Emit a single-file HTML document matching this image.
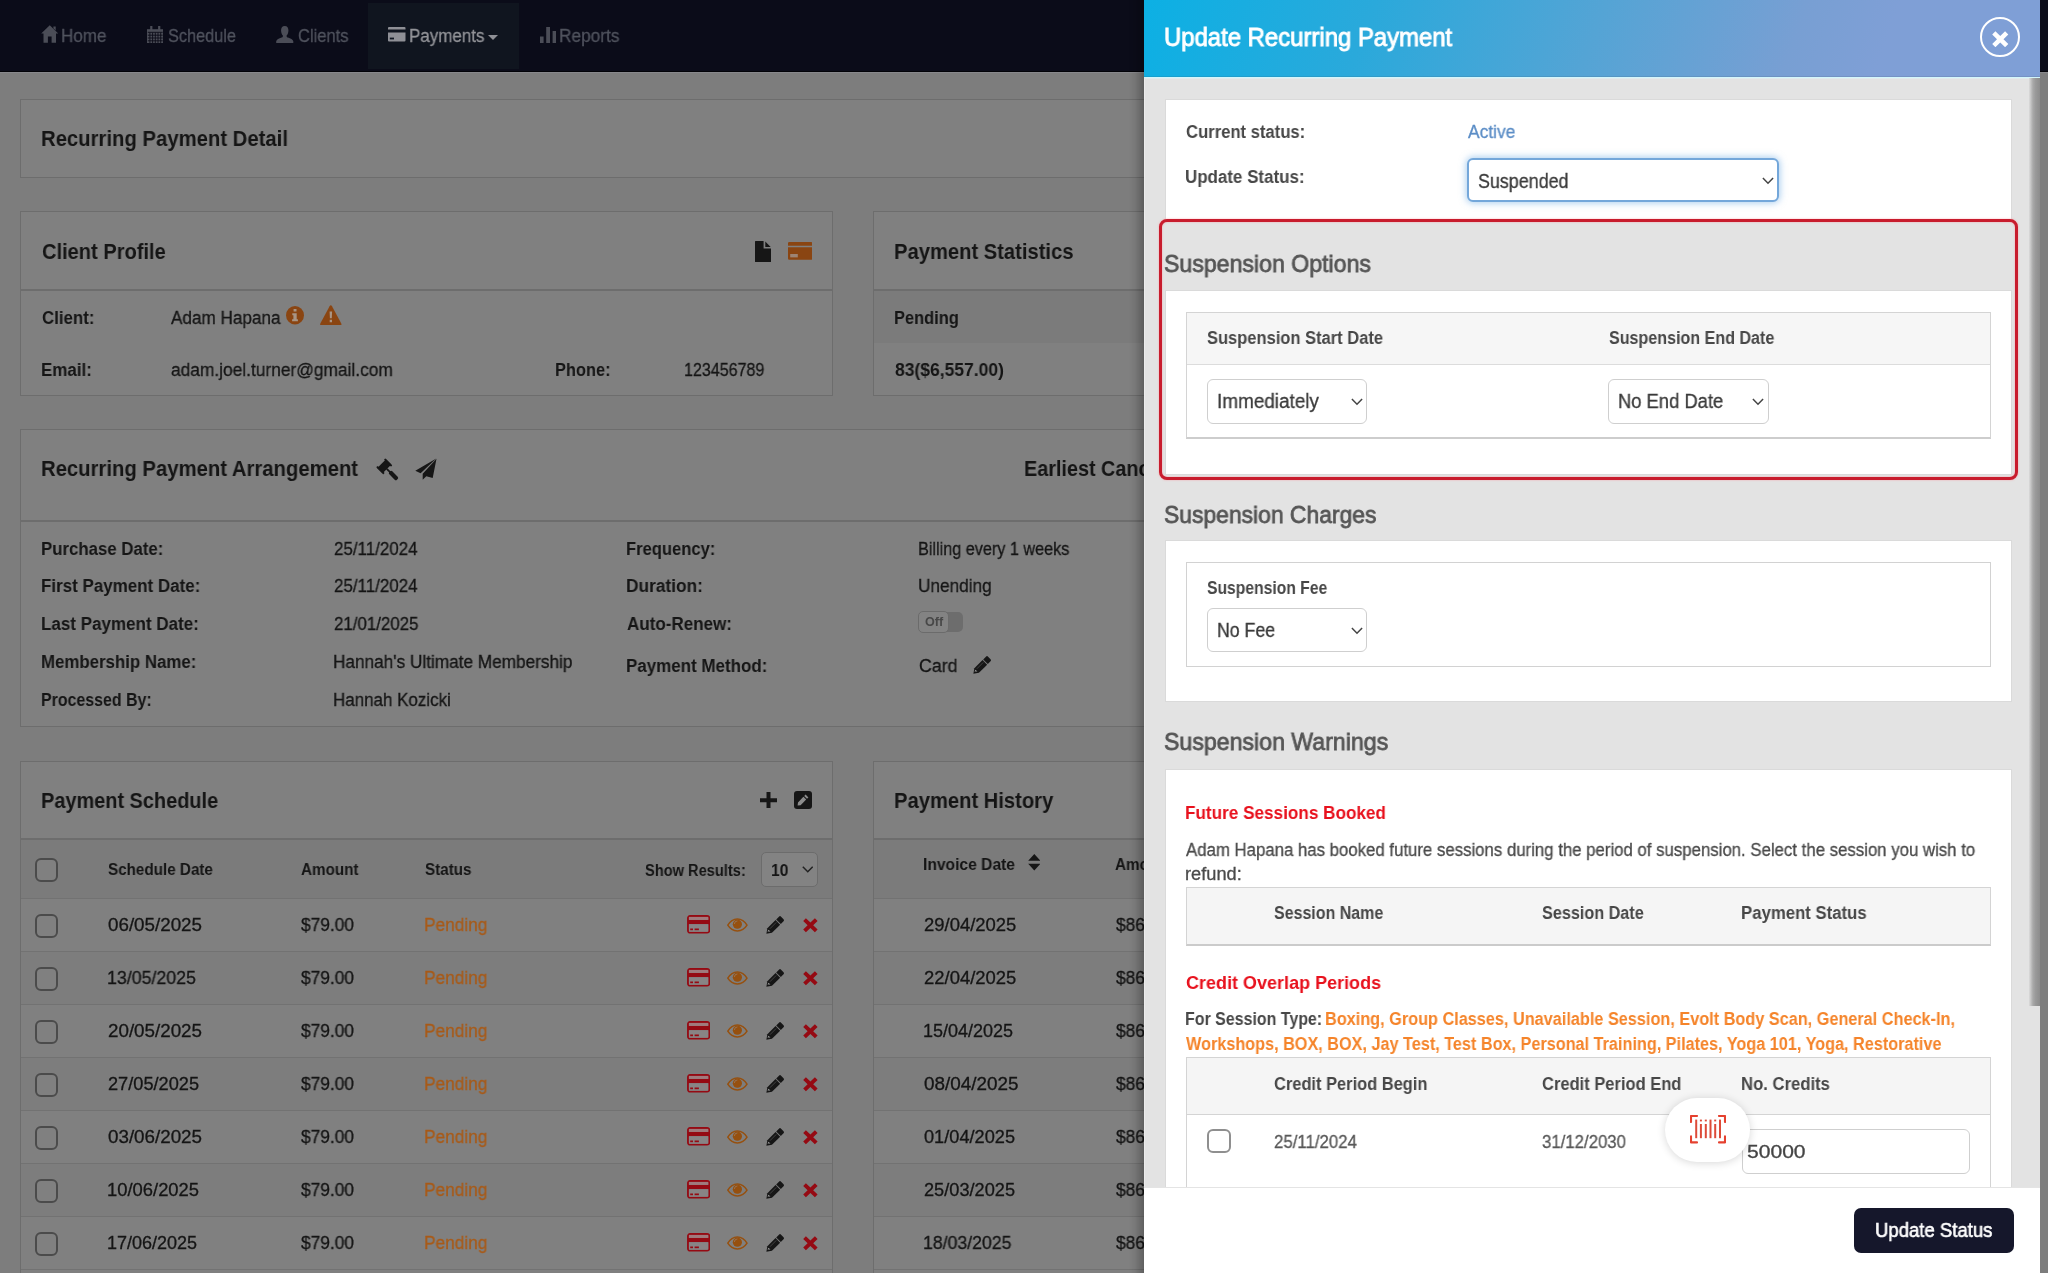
<!DOCTYPE html>
<html lang="en">
<head>
<meta charset="utf-8">
<title>Recurring Payment Detail</title>
<style>
html,body{margin:0;padding:0}
body{width:2048px;height:1273px;overflow:hidden;position:relative;background:#7d7d7d;font-family:"Liberation Sans",sans-serif}
div,span,svg{position:absolute;box-sizing:border-box}
.t{white-space:pre;line-height:1;transform-origin:0 0;letter-spacing:0;will-change:transform}
#page{left:0;top:0;width:2048px;height:1273px;overflow:hidden;background:#7d7d7d}
.card{background:#808080;border:1px solid #6d6d6d}
.hl{background:#6d6d6d;height:2px}
.rl{background:#727272;height:1px}
.cb{width:23.8px;height:23.8px;border:2.2px solid #4b4b4b;border-radius:6px;background:#808080}
#panel{left:1144px;top:0;width:896px;height:1273px;background:#e3e3e3;overflow:hidden}
.wc{background:#fff;border:1px solid #dadada}
.sel{background:#fff;border:1px solid #cfcfcf;border-radius:6px}
</style>
</head>
<body>
<div id="page">
  <!-- navbar -->
  <div style="left:0;top:0;width:2048px;height:72px;background:#0b0c19"></div>
  <div style="left:368px;top:2.5px;width:150.8px;height:66.3px;background:#10151f"></div>
  <div style="left:0;top:71px;width:2048px;height:1px;background:#020207"></div>
  <div style="left:0;top:72px;width:2048px;height:1px;background:#88888c"></div>

  <!-- cards -->
  <div class="card" style="left:20px;top:99px;width:2008px;height:79px"></div>

  <div class="card" style="left:20px;top:211px;width:813px;height:185px"></div>
  <div class="hl" style="left:20px;top:289px;width:813px"></div>

  <div class="card" style="left:873px;top:211px;width:1155px;height:185px"></div>
  <div style="left:874px;top:291px;width:1153px;height:52px;background:#7b7b7b"></div>
  <div class="hl" style="left:873px;top:289px;width:1155px"></div>

  <div class="card" style="left:20px;top:429px;width:2008px;height:298px"></div>
  <div class="hl" style="left:20px;top:520px;width:2008px"></div>

  <div class="card" style="left:20px;top:761px;width:813px;height:530px"></div>
  <div class="hl" style="left:20px;top:838px;width:813px"></div>
  <div class="card" style="left:873px;top:761px;width:1155px;height:530px"></div>
  <div style="left:874px;top:840px;width:1153px;height:58px;background:#7b7b7b"></div>
  <div class="hl" style="left:873px;top:838px;width:1155px"></div>
  <div style="left:21px;top:840px;width:811px;height:58px;background:#7b7b7b"></div>
<div style="left:21px;top:952px;width:811px;height:53px;background:#7d7d7d"></div>
<div style="left:874px;top:952px;width:1153px;height:53px;background:#7d7d7d"></div>
<div style="left:21px;top:1058px;width:811px;height:53px;background:#7d7d7d"></div>
<div style="left:874px;top:1058px;width:1153px;height:53px;background:#7d7d7d"></div>
<div style="left:21px;top:1164px;width:811px;height:53px;background:#7d7d7d"></div>
<div style="left:874px;top:1164px;width:1153px;height:53px;background:#7d7d7d"></div>
<div class="rl" style="left:21px;top:898px;width:811px"></div>
<div class="rl" style="left:874px;top:898px;width:1153px"></div>
<div class="rl" style="left:21px;top:951px;width:811px"></div>
<div class="rl" style="left:874px;top:951px;width:1153px"></div>
<div class="rl" style="left:21px;top:1004px;width:811px"></div>
<div class="rl" style="left:874px;top:1004px;width:1153px"></div>
<div class="rl" style="left:21px;top:1057px;width:811px"></div>
<div class="rl" style="left:874px;top:1057px;width:1153px"></div>
<div class="rl" style="left:21px;top:1110px;width:811px"></div>
<div class="rl" style="left:874px;top:1110px;width:1153px"></div>
<div class="rl" style="left:21px;top:1163px;width:811px"></div>
<div class="rl" style="left:874px;top:1163px;width:1153px"></div>
<div class="rl" style="left:21px;top:1216px;width:811px"></div>
<div class="rl" style="left:874px;top:1216px;width:1153px"></div>
<div class="rl" style="left:21px;top:1269px;width:811px"></div>
<div class="rl" style="left:874px;top:1269px;width:1153px"></div>
<div class="cb" style="left:34.7px;top:858.3px"></div>
<div class="cb" style="left:34.7px;top:913.8px"></div>
<div class="cb" style="left:34.7px;top:966.8px"></div>
<div class="cb" style="left:34.7px;top:1019.8px"></div>
<div class="cb" style="left:34.7px;top:1072.8px"></div>
<div class="cb" style="left:34.7px;top:1125.8px"></div>
<div class="cb" style="left:34.7px;top:1178.8px"></div>
<div class="cb" style="left:34.7px;top:1231.8px"></div>
<div style="left:761px;top:852px;width:57px;height:35px;border:1px solid #6c6c6c;border-radius:5px;background:#838383"></div>
<div style="left:940px;top:612px;width:23px;height:20px;border-radius:0 5px 5px 0;background:#6d6d6d"></div>
<div style="left:918px;top:610.5px;width:31px;height:22.5px;border-radius:5px;background:#838383;border:1.5px solid #6b6b6b"></div>

  <span class="t" style="left:60.55px;top:27.00px;font-size:18px;color:#50535e;transform:scaleX(0.9467);-webkit-text-stroke:0.3px #50535e">Home</span>
<span class="t" style="left:168.00px;top:27.00px;font-size:18px;color:#50535e;transform:scaleX(0.9061);-webkit-text-stroke:0.3px #50535e">Schedule</span>
<span class="t" style="left:297.50px;top:27.00px;font-size:18px;color:#50535e;transform:scaleX(0.9179);-webkit-text-stroke:0.3px #50535e">Clients</span>
<span class="t" style="left:409.06px;top:27.00px;font-size:18px;color:#939499;transform:scaleX(0.9426);-webkit-text-stroke:0.3px #939499">Payments</span>
<span class="t" style="left:558.54px;top:27.00px;font-size:18px;color:#50535e;transform:scaleX(0.9593);-webkit-text-stroke:0.3px #50535e">Reports</span>
<span class="t" style="left:40.58px;top:128.00px;font-size:22px;color:#151515;transform:scaleX(0.9223);font-weight:700">Recurring Payment Detail</span>
<span class="t" style="left:41.50px;top:241.00px;font-size:22px;color:#151515;transform:scaleX(0.9118);font-weight:700">Client Profile</span>
<span class="t" style="left:894.08px;top:241.00px;font-size:22px;color:#151515;transform:scaleX(0.9172);font-weight:700">Payment Statistics</span>
<span class="t" style="left:40.58px;top:458.00px;font-size:22px;color:#151515;transform:scaleX(0.9218);font-weight:700">Recurring Payment Arrangement</span>
<span class="t" style="left:1023.50px;top:458.00px;font-size:22px;color:#151515;transform:scaleX(0.9000);font-weight:700">Earliest Cancellation Date:</span>
<span class="t" style="left:40.59px;top:790.00px;font-size:22px;color:#151515;transform:scaleX(0.9054);font-weight:700">Payment Schedule</span>
<span class="t" style="left:894.08px;top:790.00px;font-size:22px;color:#151515;transform:scaleX(0.9171);font-weight:700">Payment History</span>
<span class="t" style="left:41.50px;top:309.00px;font-size:18px;color:#151515;transform:scaleX(0.9363);font-weight:700">Client:</span>
<span class="t" style="left:170.50px;top:309.00px;font-size:18px;color:#151515;transform:scaleX(0.9521);-webkit-text-stroke:0.3px #151515">Adam Hapana</span>
<span class="t" style="left:40.56px;top:361.00px;font-size:18px;color:#151515;transform:scaleX(0.9419);font-weight:700">Email:</span>
<span class="t" style="left:170.50px;top:361.00px;font-size:18px;color:#151515;transform:scaleX(0.9635);-webkit-text-stroke:0.3px #151515">adam.joel.turner@gmail.com</span>
<span class="t" style="left:554.84px;top:361.00px;font-size:18px;color:#151515;transform:scaleX(0.9110);font-weight:700">Phone:</span>
<span class="t" style="left:683.61px;top:361.00px;font-size:18px;color:#151515;transform:scaleX(0.8924);-webkit-text-stroke:0.3px #151515">123456789</span>
<span class="t" style="left:894.09px;top:309.00px;font-size:18px;color:#151515;transform:scaleX(0.9130);font-weight:700">Pending</span>
<span class="t" style="left:895.00px;top:361.00px;font-size:18px;color:#151515;transform:scaleX(0.9724);font-weight:700">83($6,557.00)</span>
<span class="t" style="left:40.57px;top:540.00px;font-size:18px;color:#151515;transform:scaleX(0.9337);font-weight:700">Purchase Date:</span>
<span class="t" style="left:334.00px;top:540.00px;font-size:18px;color:#151515;transform:scaleX(0.9409);-webkit-text-stroke:0.3px #151515">25/11/2024</span>
<span class="t" style="left:40.56px;top:577.00px;font-size:18px;color:#151515;transform:scaleX(0.9428);font-weight:700">First Payment Date:</span>
<span class="t" style="left:334.00px;top:577.00px;font-size:18px;color:#151515;transform:scaleX(0.9409);-webkit-text-stroke:0.3px #151515">25/11/2024</span>
<span class="t" style="left:40.55px;top:615.00px;font-size:18px;color:#151515;transform:scaleX(0.9451);font-weight:700">Last Payment Date:</span>
<span class="t" style="left:334.00px;top:615.00px;font-size:18px;color:#151515;transform:scaleX(0.9381);-webkit-text-stroke:0.3px #151515">21/01/2025</span>
<span class="t" style="left:40.56px;top:653.00px;font-size:18px;color:#151515;transform:scaleX(0.9357);font-weight:700">Membership Name:</span>
<span class="t" style="left:333.04px;top:653.00px;font-size:18px;color:#151515;transform:scaleX(0.9558);-webkit-text-stroke:0.3px #151515">Hannah&#x27;s Ultimate Membership</span>
<span class="t" style="left:40.61px;top:691.00px;font-size:18px;color:#151515;transform:scaleX(0.8857);font-weight:700">Processed By:</span>
<span class="t" style="left:333.06px;top:691.00px;font-size:18px;color:#151515;transform:scaleX(0.9426);-webkit-text-stroke:0.3px #151515">Hannah Kozicki</span>
<span class="t" style="left:625.58px;top:540.00px;font-size:18px;color:#151515;transform:scaleX(0.9208);font-weight:700">Frequency:</span>
<span class="t" style="left:918.30px;top:540.00px;font-size:18px;color:#151515;transform:scaleX(0.9008);-webkit-text-stroke:0.3px #151515">Billing every 1 weeks</span>
<span class="t" style="left:625.54px;top:577.00px;font-size:18px;color:#151515;transform:scaleX(0.9616);font-weight:700">Duration:</span>
<span class="t" style="left:918.24px;top:577.00px;font-size:18px;color:#151515;transform:scaleX(0.9567);-webkit-text-stroke:0.3px #151515">Unending</span>
<span class="t" style="left:626.50px;top:615.00px;font-size:18px;color:#151515;transform:scaleX(0.9455);font-weight:700">Auto-Renew:</span>
<span class="t" style="left:924.50px;top:616.00px;font-size:12.5px;color:#484848;transform:scaleX(1.0061);font-weight:700">Off</span>
<span class="t" style="left:625.56px;top:657.00px;font-size:18px;color:#151515;transform:scaleX(0.9425);font-weight:700">Payment Method:</span>
<span class="t" style="left:919.00px;top:657.00px;font-size:18px;color:#151515;transform:scaleX(0.9867);-webkit-text-stroke:0.3px #151515">Card</span>
<span class="t" style="left:108.00px;top:862.00px;font-size:16px;color:#151515;transform:scaleX(0.9514);font-weight:700">Schedule Date</span>
<span class="t" style="left:300.75px;top:862.00px;font-size:16px;color:#151515;transform:scaleX(0.9533);font-weight:700">Amount</span>
<span class="t" style="left:424.50px;top:862.00px;font-size:16px;color:#151515;transform:scaleX(0.9490);font-weight:700">Status</span>
<span class="t" style="left:645.00px;top:863.00px;font-size:16px;color:#151515;transform:scaleX(0.9136);font-weight:700">Show Results:</span>
<span class="t" style="left:771.08px;top:862.00px;font-size:17px;color:#151515;transform:scaleX(0.9167);font-weight:700">10</span>
<span class="t" style="left:922.62px;top:857.00px;font-size:16px;color:#151515;transform:scaleX(0.9758);font-weight:700">Invoice Date</span>
<span class="t" style="left:1115.20px;top:857.00px;font-size:16px;color:#151515;transform:scaleX(0.9533);font-weight:700">Amount</span>
<span class="t" style="left:108.00px;top:916.00px;font-size:18px;color:#151515;transform:scaleX(1.0435);-webkit-text-stroke:0.3px #151515">06/05/2025</span>
<span class="t" style="left:300.75px;top:916.00px;font-size:18px;color:#151515;transform:scaleX(0.9629);-webkit-text-stroke:0.3px #151515">$79.00</span>
<span class="t" style="left:423.54px;top:916.00px;font-size:18px;color:#a85a17;transform:scaleX(0.9602);-webkit-text-stroke:0.3px #a85a17">Pending</span>
<span class="t" style="left:923.75px;top:916.00px;font-size:18px;color:#151515;transform:scaleX(1.0241);-webkit-text-stroke:0.3px #151515">29/04/2025</span>
<span class="t" style="left:1115.75px;top:916.00px;font-size:18px;color:#151515;transform:scaleX(0.9629);-webkit-text-stroke:0.3px #151515">$86.00</span>
<span class="t" style="left:107.01px;top:969.00px;font-size:18px;color:#151515;transform:scaleX(0.9879);-webkit-text-stroke:0.3px #151515">13/05/2025</span>
<span class="t" style="left:300.75px;top:969.00px;font-size:18px;color:#151515;transform:scaleX(0.9629);-webkit-text-stroke:0.3px #151515">$79.00</span>
<span class="t" style="left:423.54px;top:969.00px;font-size:18px;color:#a85a17;transform:scaleX(0.9602);-webkit-text-stroke:0.3px #a85a17">Pending</span>
<span class="t" style="left:923.75px;top:969.00px;font-size:18px;color:#151515;transform:scaleX(1.0241);-webkit-text-stroke:0.3px #151515">22/04/2025</span>
<span class="t" style="left:1115.75px;top:969.00px;font-size:18px;color:#151515;transform:scaleX(0.9629);-webkit-text-stroke:0.3px #151515">$86.00</span>
<span class="t" style="left:108.00px;top:1022.00px;font-size:18px;color:#151515;transform:scaleX(1.0435);-webkit-text-stroke:0.3px #151515">20/05/2025</span>
<span class="t" style="left:300.75px;top:1022.00px;font-size:18px;color:#151515;transform:scaleX(0.9629);-webkit-text-stroke:0.3px #151515">$79.00</span>
<span class="t" style="left:423.54px;top:1022.00px;font-size:18px;color:#a85a17;transform:scaleX(0.9602);-webkit-text-stroke:0.3px #a85a17">Pending</span>
<span class="t" style="left:922.75px;top:1022.00px;font-size:18px;color:#151515;transform:scaleX(0.9991);-webkit-text-stroke:0.3px #151515">15/04/2025</span>
<span class="t" style="left:1115.75px;top:1022.00px;font-size:18px;color:#151515;transform:scaleX(0.9629);-webkit-text-stroke:0.3px #151515">$86.00</span>
<span class="t" style="left:108.00px;top:1075.00px;font-size:18px;color:#151515;transform:scaleX(1.0102);-webkit-text-stroke:0.3px #151515">27/05/2025</span>
<span class="t" style="left:300.75px;top:1075.00px;font-size:18px;color:#151515;transform:scaleX(0.9629);-webkit-text-stroke:0.3px #151515">$79.00</span>
<span class="t" style="left:423.54px;top:1075.00px;font-size:18px;color:#a85a17;transform:scaleX(0.9602);-webkit-text-stroke:0.3px #a85a17">Pending</span>
<span class="t" style="left:923.75px;top:1075.00px;font-size:18px;color:#151515;transform:scaleX(1.0491);-webkit-text-stroke:0.3px #151515">08/04/2025</span>
<span class="t" style="left:1115.75px;top:1075.00px;font-size:18px;color:#151515;transform:scaleX(0.9629);-webkit-text-stroke:0.3px #151515">$86.00</span>
<span class="t" style="left:108.00px;top:1128.00px;font-size:18px;color:#151515;transform:scaleX(1.0435);-webkit-text-stroke:0.3px #151515">03/06/2025</span>
<span class="t" style="left:300.75px;top:1128.00px;font-size:18px;color:#151515;transform:scaleX(0.9629);-webkit-text-stroke:0.3px #151515">$79.00</span>
<span class="t" style="left:423.54px;top:1128.00px;font-size:18px;color:#a85a17;transform:scaleX(0.9602);-webkit-text-stroke:0.3px #a85a17">Pending</span>
<span class="t" style="left:923.75px;top:1128.00px;font-size:18px;color:#151515;transform:scaleX(1.0102);-webkit-text-stroke:0.3px #151515">01/04/2025</span>
<span class="t" style="left:1115.75px;top:1128.00px;font-size:18px;color:#151515;transform:scaleX(0.9629);-webkit-text-stroke:0.3px #151515">$86.00</span>
<span class="t" style="left:106.98px;top:1181.00px;font-size:18px;color:#151515;transform:scaleX(1.0216);-webkit-text-stroke:0.3px #151515">10/06/2025</span>
<span class="t" style="left:300.75px;top:1181.00px;font-size:18px;color:#151515;transform:scaleX(0.9629);-webkit-text-stroke:0.3px #151515">$79.00</span>
<span class="t" style="left:423.54px;top:1181.00px;font-size:18px;color:#a85a17;transform:scaleX(0.9602);-webkit-text-stroke:0.3px #a85a17">Pending</span>
<span class="t" style="left:923.75px;top:1181.00px;font-size:18px;color:#151515;transform:scaleX(1.0102);-webkit-text-stroke:0.3px #151515">25/03/2025</span>
<span class="t" style="left:1115.75px;top:1181.00px;font-size:18px;color:#151515;transform:scaleX(0.9629);-webkit-text-stroke:0.3px #151515">$86.00</span>
<span class="t" style="left:107.00px;top:1234.00px;font-size:18px;color:#151515;transform:scaleX(0.9991);-webkit-text-stroke:0.3px #151515">17/06/2025</span>
<span class="t" style="left:300.75px;top:1234.00px;font-size:18px;color:#151515;transform:scaleX(0.9629);-webkit-text-stroke:0.3px #151515">$79.00</span>
<span class="t" style="left:423.54px;top:1234.00px;font-size:18px;color:#a85a17;transform:scaleX(0.9602);-webkit-text-stroke:0.3px #a85a17">Pending</span>
<span class="t" style="left:922.77px;top:1234.00px;font-size:18px;color:#151515;transform:scaleX(0.9823);-webkit-text-stroke:0.3px #151515">18/03/2025</span>
<span class="t" style="left:1115.75px;top:1234.00px;font-size:18px;color:#151515;transform:scaleX(0.9629);-webkit-text-stroke:0.3px #151515">$86.00</span>
  <svg style="left:40.5px;top:25px;width:17.5px;height:18px" viewBox="0 0 17.5 18" ><path fill="#4b4d57" d="M8.75 0.3 L17.3 8.6 H15 V17.7 H10.6 V11.6 H6.9 V17.7 H2.5 V8.6 H0.2 Z M12.4 1.6 h2.3 v3.9 l-2.3 -2.2z"/></svg>
<svg style="left:146.5px;top:25.5px;width:16.5px;height:17.5px" viewBox="0 0 16.5 17.5" ><path fill="#4b4d57" d="M0 3.2 H16.5 V17.5 H0 Z"/><rect x="3.2" y="0" width="2.2" height="4" fill="#4b4d57"/><rect x="11.1" y="0" width="2.2" height="4" fill="#4b4d57"/><g stroke="#0b0c19" stroke-width="0.9"><path d="M2.9 6.5 V17"/><path d="M5.6 6.5 V17"/><path d="M8.3 6.5 V17"/><path d="M11 6.5 V17"/><path d="M13.7 6.5 V17"/><path d="M0.8 6.3 H15.7"/><path d="M0.8 9.2 H15.7"/><path d="M0.8 12 H15.7"/><path d="M0.8 14.8 H15.7"/></g></svg>
<svg style="left:276px;top:25.5px;width:17.5px;height:17.5px" viewBox="0 0 17.5 17.5" ><path fill="#4b4d57" d="M8.75 0 C11.6 0 12.6 2.3 12.4 5 C12.2 7.5 11.3 8.8 10.6 9.6 C10.5 10.6 10.9 11.1 12 11.6 C14.6 12.7 16.8 13.4 17.3 15.2 V17.5 H0.2 V15.2 C0.7 13.4 2.9 12.7 5.5 11.6 C6.6 11.1 7 10.6 6.9 9.6 C6.2 8.8 5.3 7.5 5.1 5 C4.9 2.3 5.9 0 8.75 0 Z"/></svg>
<svg style="left:388px;top:27px;width:17.5px;height:14.5px" viewBox="0 0 17.5 14.5" ><path fill="#8f9096" d="M1 0 H16.5 Q17.5 0 17.5 1 V2.6 H0 V1 Q0 0 1 0 Z M0 5.4 H17.5 V13.5 Q17.5 14.5 16.5 14.5 H1 Q0 14.5 0 13.5 Z"/><rect x="1.8" y="10.6" width="4.2" height="1.8" fill="#111722"/></svg>
<svg style="left:487.5px;top:35.3px;width:10px;height:5px" viewBox="0 0 10 5" ><path fill="#8f9096" d="M0 0 H10 L5 5 Z"/></svg>
<svg style="left:539.5px;top:27px;width:16.5px;height:16px" viewBox="0 0 16.5 16" ><path fill="#4b4d57" d="M0 9.5 H3.6 V16 H0 Z M6.2 0 H10 V16 H6.2 Z M12.6 4 H16.3 V16 H12.6 Z"/></svg>
<svg style="left:755.3px;top:240.5px;width:16px;height:21.2px" viewBox="0 0 16 21.2" ><path fill="#161616" d="M0.6 0 H8.6 V7.6 H16 V20.6 Q16 21.2 15.4 21.2 H0.6 Q0 21.2 0 20.6 V0.6 Q0 0 0.6 0 Z M10.3 0.4 L15.7 5.9 H10.3 Z"/></svg>
<svg style="left:788px;top:242px;width:24.4px;height:17.8px" viewBox="0 0 24.4 17.8" ><path fill="#8a4512" d="M1.3 0 H23.1 Q24.4 0 24.4 1.3 V3.8 H0 V1.3 Q0 0 1.3 0 Z M0 5.2 H24.4 V16.5 Q24.4 17.8 23.1 17.8 H1.3 Q0 17.8 0 16.5 Z"/><rect x="2.2" y="12" width="7.6" height="3.4" fill="#9d8474"/></svg>
<svg style="left:285.6px;top:306.2px;width:18px;height:18.5px" viewBox="0 0 18 18.5" ><ellipse cx="9" cy="9.25" rx="9" ry="9.25" fill="#8a4512"/><path fill="#a89585" d="M7.6 2.9 h2.9 v2.7 h-2.9z M6.3 7.3 h4.4 v6 h1.2 v1.9 h-5.8 v-1.9 h1.3 v-4.1 h-1.1z"/></svg>
<svg style="left:320.3px;top:304.5px;width:21.6px;height:20.5px" viewBox="0 0 21.6 20.5" ><path fill="#8a4512" d="M10.8 0.3 Q11.5 0.3 12 1.2 L21.3 18.6 Q21.9 20.3 20.3 20.5 H1.3 Q-0.3 20.3 0.3 18.6 L9.6 1.2 Q10.1 0.3 10.8 0.3 Z"/><path fill="#a89585" d="M9.6 6.5 h2.5 l-0.3 6.8 h-1.9z M9.7 14.8 h2.3 v2.4 h-2.3z"/></svg>
<svg style="left:377px;top:458.8px;width:22px;height:22px" viewBox="0 0 22 22" overflow="visible"><g transform="translate(7.3 7.3) rotate(45)" fill="#161616"><rect x="-3.8" y="-6.2" width="7.6" height="12.4"/><rect x="-5" y="-6.4" width="10" height="1.9" rx="0.6"/><rect x="-5" y="4.5" width="10" height="1.9" rx="0.6"/><rect x="3.5" y="-0.9" width="5" height="1.8"/><rect x="7.6" y="-2.1" width="10.8" height="4.2" rx="1.6"/></g></svg>
<svg style="left:415px;top:457.5px;width:22px;height:22px" viewBox="0 0 22 22" ><path fill="#161616" d="M21.3 0.5 L0.3 12.8 L5.6 15.3 Z M21.5 0.8 L7.7 15.8 V21.8 L11.3 18.2 L17.7 19.9 Z"/></svg>
<svg style="left:973px;top:656px;width:19px;height:18px" viewBox="0 0 19 18" overflow="visible"><g transform="translate(0.4 17.8) rotate(-45)" fill="#161616"><path d="M0 0 L4.6 -3.25 H16.2 V3.25 H4.6 Z"/><path d="M17.1 -3.25 H21 Q22.5 -3.25 22.5 -1.75 V1.75 Q22.5 3.25 21 3.25 H17.1 Z"/><path d="M2.4 -0.9 L4.4 -1.5 L4.4 1.3 Z" fill="#9a9a9a"/><path d="M6 -1.1 H15" stroke="#5a5a5a" stroke-width="0.6" fill="none"/></g></svg>
<svg style="left:759.5px;top:791.8px;width:17px;height:16.6px" viewBox="0 0 17 16.6" ><path fill="#161616" d="M6.5 0 H10.5 V6.3 H17 V10.3 H10.5 V16.6 H6.5 V10.3 H0 V6.3 H6.5 Z"/></svg>
<svg style="left:794px;top:791px;width:18px;height:18px" viewBox="0 0 18 18" ><rect width="18" height="18" rx="3" fill="#161616"/><path fill="#8c8c8c" d="M11.6 3.6 L14.4 6.4 L13 7.8 L10.2 5 Z M9.4 5.8 L12.2 8.6 L6.6 14.2 L3.6 14.6 L4 11.4 Z"/></svg>
<svg style="left:1027.7px;top:854px;width:12.6px;height:16.6px" viewBox="0 0 12.6 16.6" ><path fill="#161616" d="M6.3 0 L12.4 6.8 H0.2 Z M6.3 16.6 L0.2 9.8 H12.4 Z"/></svg>
<svg style="left:801.5px;top:866px;width:11.5px;height:7px" viewBox="0 0 11.5 7" ><path d="M0.8 0.8 L5.75 5.8 L10.7 0.8" fill="none" stroke="#222" stroke-width="1.5"/></svg>
<svg style="left:686.6px;top:915.3px;width:23.2px;height:18.6px" viewBox="0 0 23.2 18.6" ><rect x="1" y="1" width="21.2" height="16.6" rx="2" fill="none" stroke="#950a13" stroke-width="1.9"/><rect x="1" y="4.9" width="21.2" height="4.3" fill="#950a13"/><rect x="1.9" y="1.9" width="19.4" height="3" fill="#a07a7d"/><rect x="1.9" y="9.2" width="19.4" height="7.5" fill="#888485"/><rect x="3.2" y="13.5" width="2.8" height="1.7" fill="#950a13"/><rect x="7.6" y="13.5" width="4.3" height="1.7" fill="#950a13"/></svg>
<svg style="left:727.3px;top:918.2px;width:20.8px;height:13.8px" viewBox="0 0 20.8 13.8" ><path d="M0.8 7.2 C4 1.6 8 0.9 10.4 0.9 C12.8 0.9 16.8 1.6 20 7.2 C16.8 12.4 12.8 12.9 10.4 12.9 C8 12.9 4 12.4 0.8 7.2 Z" fill="none" stroke="#96500f" stroke-width="1.5"/><circle cx="10.4" cy="6.2" r="4.6" fill="#96500f"/><path d="M10.4 3 A3 3 0 0 0 7.4 6" fill="none" stroke="#96765a" stroke-width="0.9"/></svg>
<svg style="left:765.5px;top:916px;width:19px;height:18px" viewBox="0 0 19 18" overflow="visible"><g transform="translate(0.4 17.8) rotate(-45)" fill="#161616"><path d="M0 0 L4.6 -3.25 H16.2 V3.25 H4.6 Z"/><path d="M17.1 -3.25 H21 Q22.5 -3.25 22.5 -1.75 V1.75 Q22.5 3.25 21 3.25 H17.1 Z"/><path d="M2.4 -0.9 L4.4 -1.5 L4.4 1.3 Z" fill="#9a9a9a"/><path d="M6 -1.1 H15" stroke="#5a5a5a" stroke-width="0.6" fill="none"/></g></svg>
<svg style="left:803px;top:918.2px;width:14.8px;height:14.4px" viewBox="0 0 14.8 14.4" ><path fill="#950a13" d="M2.9 0.2 L7.4 4.5 L11.9 0.2 L14.6 2.9 L10.2 7.2 L14.6 11.5 L11.9 14.2 L7.4 9.9 L2.9 14.2 L0.2 11.5 L4.6 7.2 L0.2 2.9 Z"/></svg>
<svg style="left:686.6px;top:968.3px;width:23.2px;height:18.6px" viewBox="0 0 23.2 18.6" ><rect x="1" y="1" width="21.2" height="16.6" rx="2" fill="none" stroke="#950a13" stroke-width="1.9"/><rect x="1" y="4.9" width="21.2" height="4.3" fill="#950a13"/><rect x="1.9" y="1.9" width="19.4" height="3" fill="#a07a7d"/><rect x="1.9" y="9.2" width="19.4" height="7.5" fill="#888485"/><rect x="3.2" y="13.5" width="2.8" height="1.7" fill="#950a13"/><rect x="7.6" y="13.5" width="4.3" height="1.7" fill="#950a13"/></svg>
<svg style="left:727.3px;top:971.2px;width:20.8px;height:13.8px" viewBox="0 0 20.8 13.8" ><path d="M0.8 7.2 C4 1.6 8 0.9 10.4 0.9 C12.8 0.9 16.8 1.6 20 7.2 C16.8 12.4 12.8 12.9 10.4 12.9 C8 12.9 4 12.4 0.8 7.2 Z" fill="none" stroke="#96500f" stroke-width="1.5"/><circle cx="10.4" cy="6.2" r="4.6" fill="#96500f"/><path d="M10.4 3 A3 3 0 0 0 7.4 6" fill="none" stroke="#96765a" stroke-width="0.9"/></svg>
<svg style="left:765.5px;top:969px;width:19px;height:18px" viewBox="0 0 19 18" overflow="visible"><g transform="translate(0.4 17.8) rotate(-45)" fill="#161616"><path d="M0 0 L4.6 -3.25 H16.2 V3.25 H4.6 Z"/><path d="M17.1 -3.25 H21 Q22.5 -3.25 22.5 -1.75 V1.75 Q22.5 3.25 21 3.25 H17.1 Z"/><path d="M2.4 -0.9 L4.4 -1.5 L4.4 1.3 Z" fill="#9a9a9a"/><path d="M6 -1.1 H15" stroke="#5a5a5a" stroke-width="0.6" fill="none"/></g></svg>
<svg style="left:803px;top:971.2px;width:14.8px;height:14.4px" viewBox="0 0 14.8 14.4" ><path fill="#950a13" d="M2.9 0.2 L7.4 4.5 L11.9 0.2 L14.6 2.9 L10.2 7.2 L14.6 11.5 L11.9 14.2 L7.4 9.9 L2.9 14.2 L0.2 11.5 L4.6 7.2 L0.2 2.9 Z"/></svg>
<svg style="left:686.6px;top:1021.3px;width:23.2px;height:18.6px" viewBox="0 0 23.2 18.6" ><rect x="1" y="1" width="21.2" height="16.6" rx="2" fill="none" stroke="#950a13" stroke-width="1.9"/><rect x="1" y="4.9" width="21.2" height="4.3" fill="#950a13"/><rect x="1.9" y="1.9" width="19.4" height="3" fill="#a07a7d"/><rect x="1.9" y="9.2" width="19.4" height="7.5" fill="#888485"/><rect x="3.2" y="13.5" width="2.8" height="1.7" fill="#950a13"/><rect x="7.6" y="13.5" width="4.3" height="1.7" fill="#950a13"/></svg>
<svg style="left:727.3px;top:1024.2px;width:20.8px;height:13.8px" viewBox="0 0 20.8 13.8" ><path d="M0.8 7.2 C4 1.6 8 0.9 10.4 0.9 C12.8 0.9 16.8 1.6 20 7.2 C16.8 12.4 12.8 12.9 10.4 12.9 C8 12.9 4 12.4 0.8 7.2 Z" fill="none" stroke="#96500f" stroke-width="1.5"/><circle cx="10.4" cy="6.2" r="4.6" fill="#96500f"/><path d="M10.4 3 A3 3 0 0 0 7.4 6" fill="none" stroke="#96765a" stroke-width="0.9"/></svg>
<svg style="left:765.5px;top:1022px;width:19px;height:18px" viewBox="0 0 19 18" overflow="visible"><g transform="translate(0.4 17.8) rotate(-45)" fill="#161616"><path d="M0 0 L4.6 -3.25 H16.2 V3.25 H4.6 Z"/><path d="M17.1 -3.25 H21 Q22.5 -3.25 22.5 -1.75 V1.75 Q22.5 3.25 21 3.25 H17.1 Z"/><path d="M2.4 -0.9 L4.4 -1.5 L4.4 1.3 Z" fill="#9a9a9a"/><path d="M6 -1.1 H15" stroke="#5a5a5a" stroke-width="0.6" fill="none"/></g></svg>
<svg style="left:803px;top:1024.2px;width:14.8px;height:14.4px" viewBox="0 0 14.8 14.4" ><path fill="#950a13" d="M2.9 0.2 L7.4 4.5 L11.9 0.2 L14.6 2.9 L10.2 7.2 L14.6 11.5 L11.9 14.2 L7.4 9.9 L2.9 14.2 L0.2 11.5 L4.6 7.2 L0.2 2.9 Z"/></svg>
<svg style="left:686.6px;top:1074.3px;width:23.2px;height:18.6px" viewBox="0 0 23.2 18.6" ><rect x="1" y="1" width="21.2" height="16.6" rx="2" fill="none" stroke="#950a13" stroke-width="1.9"/><rect x="1" y="4.9" width="21.2" height="4.3" fill="#950a13"/><rect x="1.9" y="1.9" width="19.4" height="3" fill="#a07a7d"/><rect x="1.9" y="9.2" width="19.4" height="7.5" fill="#888485"/><rect x="3.2" y="13.5" width="2.8" height="1.7" fill="#950a13"/><rect x="7.6" y="13.5" width="4.3" height="1.7" fill="#950a13"/></svg>
<svg style="left:727.3px;top:1077.2px;width:20.8px;height:13.8px" viewBox="0 0 20.8 13.8" ><path d="M0.8 7.2 C4 1.6 8 0.9 10.4 0.9 C12.8 0.9 16.8 1.6 20 7.2 C16.8 12.4 12.8 12.9 10.4 12.9 C8 12.9 4 12.4 0.8 7.2 Z" fill="none" stroke="#96500f" stroke-width="1.5"/><circle cx="10.4" cy="6.2" r="4.6" fill="#96500f"/><path d="M10.4 3 A3 3 0 0 0 7.4 6" fill="none" stroke="#96765a" stroke-width="0.9"/></svg>
<svg style="left:765.5px;top:1075px;width:19px;height:18px" viewBox="0 0 19 18" overflow="visible"><g transform="translate(0.4 17.8) rotate(-45)" fill="#161616"><path d="M0 0 L4.6 -3.25 H16.2 V3.25 H4.6 Z"/><path d="M17.1 -3.25 H21 Q22.5 -3.25 22.5 -1.75 V1.75 Q22.5 3.25 21 3.25 H17.1 Z"/><path d="M2.4 -0.9 L4.4 -1.5 L4.4 1.3 Z" fill="#9a9a9a"/><path d="M6 -1.1 H15" stroke="#5a5a5a" stroke-width="0.6" fill="none"/></g></svg>
<svg style="left:803px;top:1077.2px;width:14.8px;height:14.4px" viewBox="0 0 14.8 14.4" ><path fill="#950a13" d="M2.9 0.2 L7.4 4.5 L11.9 0.2 L14.6 2.9 L10.2 7.2 L14.6 11.5 L11.9 14.2 L7.4 9.9 L2.9 14.2 L0.2 11.5 L4.6 7.2 L0.2 2.9 Z"/></svg>
<svg style="left:686.6px;top:1127.3px;width:23.2px;height:18.6px" viewBox="0 0 23.2 18.6" ><rect x="1" y="1" width="21.2" height="16.6" rx="2" fill="none" stroke="#950a13" stroke-width="1.9"/><rect x="1" y="4.9" width="21.2" height="4.3" fill="#950a13"/><rect x="1.9" y="1.9" width="19.4" height="3" fill="#a07a7d"/><rect x="1.9" y="9.2" width="19.4" height="7.5" fill="#888485"/><rect x="3.2" y="13.5" width="2.8" height="1.7" fill="#950a13"/><rect x="7.6" y="13.5" width="4.3" height="1.7" fill="#950a13"/></svg>
<svg style="left:727.3px;top:1130.2px;width:20.8px;height:13.8px" viewBox="0 0 20.8 13.8" ><path d="M0.8 7.2 C4 1.6 8 0.9 10.4 0.9 C12.8 0.9 16.8 1.6 20 7.2 C16.8 12.4 12.8 12.9 10.4 12.9 C8 12.9 4 12.4 0.8 7.2 Z" fill="none" stroke="#96500f" stroke-width="1.5"/><circle cx="10.4" cy="6.2" r="4.6" fill="#96500f"/><path d="M10.4 3 A3 3 0 0 0 7.4 6" fill="none" stroke="#96765a" stroke-width="0.9"/></svg>
<svg style="left:765.5px;top:1128px;width:19px;height:18px" viewBox="0 0 19 18" overflow="visible"><g transform="translate(0.4 17.8) rotate(-45)" fill="#161616"><path d="M0 0 L4.6 -3.25 H16.2 V3.25 H4.6 Z"/><path d="M17.1 -3.25 H21 Q22.5 -3.25 22.5 -1.75 V1.75 Q22.5 3.25 21 3.25 H17.1 Z"/><path d="M2.4 -0.9 L4.4 -1.5 L4.4 1.3 Z" fill="#9a9a9a"/><path d="M6 -1.1 H15" stroke="#5a5a5a" stroke-width="0.6" fill="none"/></g></svg>
<svg style="left:803px;top:1130.2px;width:14.8px;height:14.4px" viewBox="0 0 14.8 14.4" ><path fill="#950a13" d="M2.9 0.2 L7.4 4.5 L11.9 0.2 L14.6 2.9 L10.2 7.2 L14.6 11.5 L11.9 14.2 L7.4 9.9 L2.9 14.2 L0.2 11.5 L4.6 7.2 L0.2 2.9 Z"/></svg>
<svg style="left:686.6px;top:1180.3px;width:23.2px;height:18.6px" viewBox="0 0 23.2 18.6" ><rect x="1" y="1" width="21.2" height="16.6" rx="2" fill="none" stroke="#950a13" stroke-width="1.9"/><rect x="1" y="4.9" width="21.2" height="4.3" fill="#950a13"/><rect x="1.9" y="1.9" width="19.4" height="3" fill="#a07a7d"/><rect x="1.9" y="9.2" width="19.4" height="7.5" fill="#888485"/><rect x="3.2" y="13.5" width="2.8" height="1.7" fill="#950a13"/><rect x="7.6" y="13.5" width="4.3" height="1.7" fill="#950a13"/></svg>
<svg style="left:727.3px;top:1183.2px;width:20.8px;height:13.8px" viewBox="0 0 20.8 13.8" ><path d="M0.8 7.2 C4 1.6 8 0.9 10.4 0.9 C12.8 0.9 16.8 1.6 20 7.2 C16.8 12.4 12.8 12.9 10.4 12.9 C8 12.9 4 12.4 0.8 7.2 Z" fill="none" stroke="#96500f" stroke-width="1.5"/><circle cx="10.4" cy="6.2" r="4.6" fill="#96500f"/><path d="M10.4 3 A3 3 0 0 0 7.4 6" fill="none" stroke="#96765a" stroke-width="0.9"/></svg>
<svg style="left:765.5px;top:1181px;width:19px;height:18px" viewBox="0 0 19 18" overflow="visible"><g transform="translate(0.4 17.8) rotate(-45)" fill="#161616"><path d="M0 0 L4.6 -3.25 H16.2 V3.25 H4.6 Z"/><path d="M17.1 -3.25 H21 Q22.5 -3.25 22.5 -1.75 V1.75 Q22.5 3.25 21 3.25 H17.1 Z"/><path d="M2.4 -0.9 L4.4 -1.5 L4.4 1.3 Z" fill="#9a9a9a"/><path d="M6 -1.1 H15" stroke="#5a5a5a" stroke-width="0.6" fill="none"/></g></svg>
<svg style="left:803px;top:1183.2px;width:14.8px;height:14.4px" viewBox="0 0 14.8 14.4" ><path fill="#950a13" d="M2.9 0.2 L7.4 4.5 L11.9 0.2 L14.6 2.9 L10.2 7.2 L14.6 11.5 L11.9 14.2 L7.4 9.9 L2.9 14.2 L0.2 11.5 L4.6 7.2 L0.2 2.9 Z"/></svg>
<svg style="left:686.6px;top:1233.3px;width:23.2px;height:18.6px" viewBox="0 0 23.2 18.6" ><rect x="1" y="1" width="21.2" height="16.6" rx="2" fill="none" stroke="#950a13" stroke-width="1.9"/><rect x="1" y="4.9" width="21.2" height="4.3" fill="#950a13"/><rect x="1.9" y="1.9" width="19.4" height="3" fill="#a07a7d"/><rect x="1.9" y="9.2" width="19.4" height="7.5" fill="#888485"/><rect x="3.2" y="13.5" width="2.8" height="1.7" fill="#950a13"/><rect x="7.6" y="13.5" width="4.3" height="1.7" fill="#950a13"/></svg>
<svg style="left:727.3px;top:1236.2px;width:20.8px;height:13.8px" viewBox="0 0 20.8 13.8" ><path d="M0.8 7.2 C4 1.6 8 0.9 10.4 0.9 C12.8 0.9 16.8 1.6 20 7.2 C16.8 12.4 12.8 12.9 10.4 12.9 C8 12.9 4 12.4 0.8 7.2 Z" fill="none" stroke="#96500f" stroke-width="1.5"/><circle cx="10.4" cy="6.2" r="4.6" fill="#96500f"/><path d="M10.4 3 A3 3 0 0 0 7.4 6" fill="none" stroke="#96765a" stroke-width="0.9"/></svg>
<svg style="left:765.5px;top:1234px;width:19px;height:18px" viewBox="0 0 19 18" overflow="visible"><g transform="translate(0.4 17.8) rotate(-45)" fill="#161616"><path d="M0 0 L4.6 -3.25 H16.2 V3.25 H4.6 Z"/><path d="M17.1 -3.25 H21 Q22.5 -3.25 22.5 -1.75 V1.75 Q22.5 3.25 21 3.25 H17.1 Z"/><path d="M2.4 -0.9 L4.4 -1.5 L4.4 1.3 Z" fill="#9a9a9a"/><path d="M6 -1.1 H15" stroke="#5a5a5a" stroke-width="0.6" fill="none"/></g></svg>
<svg style="left:803px;top:1236.2px;width:14.8px;height:14.4px" viewBox="0 0 14.8 14.4" ><path fill="#950a13" d="M2.9 0.2 L7.4 4.5 L11.9 0.2 L14.6 2.9 L10.2 7.2 L14.6 11.5 L11.9 14.2 L7.4 9.9 L2.9 14.2 L0.2 11.5 L4.6 7.2 L0.2 2.9 Z"/></svg>

  <!-- panel shadow -->
  <div style="left:1129px;top:0;width:15px;height:1273px;background:linear-gradient(90deg,rgba(0,0,0,0),rgba(0,0,0,0.06) 40%,rgba(0,0,0,0.25))"></div>
</div>

<div id="panel">
  <div style="left:0px;top:0px;width:896px;height:77px;background:linear-gradient(110deg,#0cb0e4 0%,#2aa9db 25%,#54a4d5 50%,#789fd3 72%,#7f9fd6 82%,#7f9fd6 100%)"></div>
<div style="left:0px;top:76px;width:896px;height:1px;background:rgba(60,60,80,0.13)"></div>
<div style="left:0px;top:77px;width:896px;height:1px;background:#d3f6fb"></div>
<div style="left:0px;top:78px;width:896px;height:1px;background:rgba(225,240,245,0.6)"></div>
<div style="left:0px;top:79px;width:1px;height:1108px;background:#ececec"></div>
<div class="wc" style="left:21px;top:99px;width:847px;height:141px;"></div>
<div style="left:323px;top:158px;width:312px;height:44px;background:#fff;border:2px solid #74a7da;border-radius:6px;box-shadow:0 0 7px 1px rgba(100,165,225,0.55)"></div>
<div style="left:14.6px;top:218.8px;width:859.2px;height:261px;background:#e3e3e3;border:3px solid #c81c2d;border-radius:8px;box-shadow:0 0 2px rgba(255,130,140,0.7),inset 0 0 2px rgba(255,130,140,0.7)"></div>
<div class="wc" style="left:21px;top:290px;width:847px;height:184.5px;"></div>
<div style="left:42px;top:312px;width:805px;height:127px;background:#fff;border:1px solid #d4d4d4;border-bottom:2px solid #cdcdcd"></div>
<div style="left:43px;top:313px;width:803px;height:52px;background:#f6f6f6;border-bottom:1px solid #dcdcdc"></div>
<div class="sel" style="left:63px;top:379px;width:160px;height:45px;"></div>
<div class="sel" style="left:464px;top:379px;width:161px;height:45px;"></div>
<div class="wc" style="left:21px;top:540px;width:847px;height:162px;"></div>
<div style="left:42px;top:562px;width:805px;height:105px;background:#fff;border:1px solid #d2d2d2"></div>
<div class="sel" style="left:63px;top:608px;width:160px;height:44px;"></div>
<div class="wc" style="left:21px;top:769px;width:847px;height:531px;"></div>
<div style="left:42px;top:887px;width:805px;height:59px;background:#f5f5f5;border:1px solid #d4d4d4;border-bottom:2px solid #cbcbcb"></div>
<div style="left:42px;top:1057px;width:805px;height:243px;background:#fff;border:1px solid #d4d4d4"></div>
<div style="left:43px;top:1058px;width:803px;height:57px;background:#f5f5f5;border-bottom:1px solid #d4d4d4"></div>
<div style="left:63px;top:1129px;width:23.6px;height:23.7px;background:#fff;border:2.2px solid #8f8f8f;border-radius:6px"></div>
<div style="left:598px;top:1129px;width:227.5px;height:44.5px;background:#fff;border:1px solid #cfcfcf;border-radius:6px"></div>
<div style="left:521px;top:1098px;width:85px;height:64px;background:#fff;border-radius:32px;box-shadow:0 1px 8px rgba(0,0,0,0.16)"></div>
<div style="left:0px;top:1187px;width:896px;height:86px;background:#fff;border-top:1px solid #e4e4e4"></div>
<div style="left:710px;top:1208px;width:159.5px;height:45px;background:#15172b;border-radius:7px"></div>
<div style="left:885px;top:78px;width:11px;height:928px;background:linear-gradient(90deg,#dcdcdc 0%,#a9a9a9 35%,#999 60%,#8c8c8c 100%)"></div>
<div style="left:836px;top:17px;width:40px;height:40px;border:2.5px solid #fff;border-radius:50%"></div>
</div>
<span class="t" style="left:1163.54px;top:25.00px;font-size:25px;color:#fff;transform:scaleX(0.9556);-webkit-text-stroke:0.9px #fff">Update Recurring Payment</span>
<span class="t" style="left:1185.75px;top:124.00px;font-size:17.5px;color:#474747;transform:scaleX(0.9510);font-weight:700">Current status:</span>
<span class="t" style="left:1468.00px;top:124.00px;font-size:17.5px;color:#5b8dc6;transform:scaleX(0.9910);-webkit-text-stroke:0.3px #5b8dc6">Active</span>
<span class="t" style="left:1184.78px;top:169.00px;font-size:17.5px;color:#474747;transform:scaleX(0.9679);font-weight:700">Update Status:</span>
<span class="t" style="left:1478.25px;top:172.00px;font-size:19.5px;color:#3a3a3a;transform:scaleX(0.9174);-webkit-text-stroke:0.3px #3a3a3a">Suspended</span>
<span class="t" style="left:1164.06px;top:252.00px;font-size:24.5px;color:#565656;transform:scaleX(0.9437);-webkit-text-stroke:0.8px #565656">Suspension Options</span>
<span class="t" style="left:1207.00px;top:330.00px;font-size:17.5px;color:#474747;transform:scaleX(0.9426);font-weight:700">Suspension Start Date</span>
<span class="t" style="left:1608.50px;top:330.00px;font-size:17.5px;color:#474747;transform:scaleX(0.9187);font-weight:700">Suspension End Date</span>
<span class="t" style="left:1217.03px;top:392.00px;font-size:19.5px;color:#3a3a3a;transform:scaleX(0.9701);-webkit-text-stroke:0.3px #3a3a3a">Immediately</span>
<span class="t" style="left:1618.31px;top:392.00px;font-size:19.5px;color:#3a3a3a;transform:scaleX(0.9426);-webkit-text-stroke:0.3px #3a3a3a">No End Date</span>
<span class="t" style="left:1164.07px;top:503.00px;font-size:24.5px;color:#565656;transform:scaleX(0.9339);-webkit-text-stroke:0.8px #565656">Suspension Charges</span>
<span class="t" style="left:1207.00px;top:580.00px;font-size:17.5px;color:#474747;transform:scaleX(0.8961);font-weight:700">Suspension Fee</span>
<span class="t" style="left:1217.09px;top:621.00px;font-size:19.5px;color:#3a3a3a;transform:scaleX(0.9098);-webkit-text-stroke:0.3px #3a3a3a">No Fee</span>
<span class="t" style="left:1164.06px;top:730.00px;font-size:24.5px;color:#565656;transform:scaleX(0.9443);-webkit-text-stroke:0.8px #565656">Suspension Warnings</span>
<span class="t" style="left:1184.82px;top:804.00px;font-size:18.5px;color:#e8111d;transform:scaleX(0.9265);font-weight:700">Future Sessions Booked</span>
<span class="t" style="left:1185.75px;top:842.00px;font-size:17.5px;color:#4a4a4a;transform:scaleX(0.9589);-webkit-text-stroke:0.3px #4a4a4a">Adam Hapana has booked future sessions during the period of suspension. Select the session you wish to</span>
<span class="t" style="left:1184.71px;top:866.00px;font-size:17.5px;color:#4a4a4a;transform:scaleX(1.0405);-webkit-text-stroke:0.3px #4a4a4a">refund:</span>
<span class="t" style="left:1274.25px;top:905.00px;font-size:17.5px;color:#474747;transform:scaleX(0.9132);font-weight:700">Session Name</span>
<span class="t" style="left:1541.50px;top:905.00px;font-size:17.5px;color:#474747;transform:scaleX(0.9258);font-weight:700">Session Date</span>
<span class="t" style="left:1741.29px;top:905.00px;font-size:17.5px;color:#474747;transform:scaleX(0.9574);font-weight:700">Payment Status</span>
<span class="t" style="left:1185.75px;top:974.00px;font-size:18.5px;color:#e8111d;transform:scaleX(0.9728);font-weight:700">Credit Overlap Periods</span>
<span class="t" style="left:1184.84px;top:1011.00px;font-size:17.5px;color:#474747;transform:scaleX(0.9120);font-weight:700">For Session Type:</span>
<span class="t" style="left:1324.82px;top:1011.00px;font-size:17.5px;color:#f5842a;transform:scaleX(0.9294);font-weight:700">Boxing, Group Classes, Unavailable Session, Evolt Body Scan, General Check-In,</span>
<span class="t" style="left:1185.75px;top:1036.00px;font-size:17.5px;color:#f5842a;transform:scaleX(0.9273);font-weight:700">Workshops, BOX, BOX, Jay Test, Test Box, Personal Training, Pilates, Yoga 101, Yoga, Restorative</span>
<span class="t" style="left:1274.25px;top:1076.00px;font-size:17.5px;color:#474747;transform:scaleX(0.9391);font-weight:700">Credit Period Begin</span>
<span class="t" style="left:1541.50px;top:1076.00px;font-size:17.5px;color:#474747;transform:scaleX(0.9432);font-weight:700">Credit Period End</span>
<span class="t" style="left:1741.30px;top:1076.00px;font-size:17.5px;color:#474747;transform:scaleX(0.9529);font-weight:700">No. Credits</span>
<span class="t" style="left:1274.25px;top:1134.00px;font-size:17.5px;color:#585858;transform:scaleX(0.9618);-webkit-text-stroke:0.3px #585858">25/11/2024</span>
<span class="t" style="left:1541.75px;top:1134.00px;font-size:17.5px;color:#585858;transform:scaleX(0.9590);-webkit-text-stroke:0.3px #585858">31/12/2030</span>
<span class="t" style="left:1747.25px;top:1143.00px;font-size:18.5px;color:#444;transform:scaleX(1.1387);-webkit-text-stroke:0.3px #444">50000</span>
<span class="t" style="left:1874.55px;top:1221.00px;font-size:19.5px;color:#fff;transform:scaleX(0.9505);-webkit-text-stroke:0.6px #fff">Update Status</span>
<svg style="left:1992px;top:30.8px;width:16.5px;height:16.4px" viewBox="0 0 16.5 16.4" ><path fill="#fff" d="M3.4 0.2 L8.25 5 L13.1 0.2 L16.3 3.4 L11.5 8.2 L16.3 13 L13.1 16.2 L8.25 11.4 L3.4 16.2 L0.2 13 L5 8.2 L0.2 3.4 Z"/></svg>
<svg style="left:1762px;top:176.8px;width:12px;height:8px" viewBox="0 0 12 8" ><path d="M0.9 1 L6 6.2 L11.1 1" fill="none" stroke="#444" stroke-width="1.5"/></svg>
<svg style="left:1350.5px;top:397.5px;width:12px;height:8px" viewBox="0 0 12 8" ><path d="M0.9 1 L6 6.2 L11.1 1" fill="none" stroke="#444" stroke-width="1.5"/></svg>
<svg style="left:1751.5px;top:397.5px;width:12px;height:8px" viewBox="0 0 12 8" ><path d="M0.9 1 L6 6.2 L11.1 1" fill="none" stroke="#444" stroke-width="1.5"/></svg>
<svg style="left:1350.5px;top:626.5px;width:12px;height:8px" viewBox="0 0 12 8" ><path d="M0.9 1 L6 6.2 L11.1 1" fill="none" stroke="#444" stroke-width="1.5"/></svg>
<svg style="left:1689.8px;top:1115.4px;width:36px;height:28.4px" viewBox="0 0 36 28.4" ><g fill="none" stroke="#e5412f" stroke-width="2.1" stroke-linejoin="round" stroke-linecap="round"><path d="M1 7 V1 H7"/><path d="M29 1 H35 V7"/><path d="M35 21.4 V27.4 H29"/><path d="M7 27.4 H1 V21.4"/></g><rect x="5.2" y="4.6" width="2" height="18.6" fill="#dd4b39"/><rect x="9.9" y="4.6" width="2" height="1.8" fill="#dd4b39"/><rect x="9.9" y="9" width="2" height="14.2" fill="#dd4b39"/><rect x="14.8" y="4.6" width="2" height="1.8" fill="#dd4b39"/><rect x="14.8" y="9" width="2" height="14.2" fill="#dd4b39"/><rect x="19.5" y="4.6" width="2" height="18.6" fill="#dd4b39"/><rect x="24.2" y="4.6" width="2" height="1.8" fill="#dd4b39"/><rect x="24.2" y="9" width="2" height="14.2" fill="#dd4b39"/><rect x="29" y="4.6" width="2" height="18.6" fill="#dd4b39"/></svg>
</body>
</html>
